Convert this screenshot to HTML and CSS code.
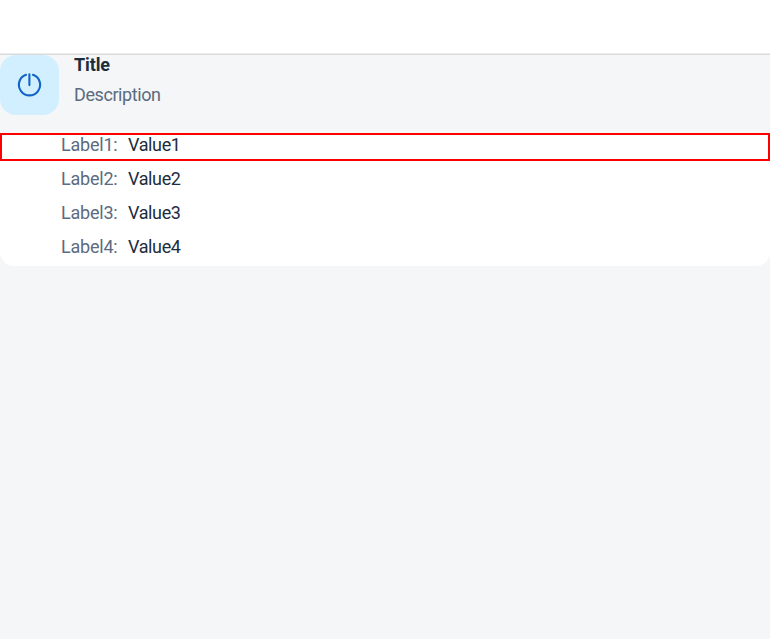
FILE: index.html
```html
<!DOCTYPE html>
<html lang="en">
<head>
<meta charset="utf-8">
<title>Details</title>
<link rel="stylesheet" href="styles.css">
</head>
<body>
<header class="shell"></header>
<main>
  <section class="heading">
    <div class="avatar">
      <svg width="25" height="24" viewBox="0 0 25 24" fill="none" stroke="#1263c6" stroke-width="2.1" stroke-linecap="round"><path d="M12.4 1.3v10.8M9 1.8a10.6 10.6 0 1 0 7 0"/></svg>
    </div>
    <div class="headline">
      <h1>Title</h1>
      <p>Description</p>
    </div>
  </section>
  <div class="list-top"></div>
  <section class="list">
    <div class="row selected"><span class="label">Label1:</span><span class="value">Value1</span></div>
    <div class="row"><span class="label">Label2:</span><span class="value">Value2</span></div>
    <div class="row"><span class="label">Label3:</span><span class="value">Value3</span></div>
    <div class="row"><span class="label">Label4:</span><span class="value">Value4</span></div>
  </section>
</main>
</body>
</html>
```
FILE: styles.css
```css
* { box-sizing: border-box; }
body { margin: 0; height: 639px; overflow: hidden; background: #f5f6f7; color: #1d2d3e; font: 18px/24px Roboto, "Liberation Sans", sans-serif; }
.shell { height: 53px; background: #fff; box-shadow: 0 1px 0 #ececec, 0 2px 0 #d9dada; }
.heading { display: flex; height: 77px; padding-top: 2px; }
.avatar { display: flex; align-items: center; justify-content: center; width: 59px; height: 60px; border-radius: 16px; background: #d1efff; }
.headline { margin-left: 15px; }
h1, p { margin: 0; font-size: 18px; line-height: 20px; }
h1 { font-weight: 700; letter-spacing: -0.1px; }
p { margin-top: 10px; color: #5b6b80; letter-spacing: -0.42px; }
.list-top { height: 3px; margin: 0 6px; background: #f7f8f9; }
.list { height: 133px; background: #fff; border-radius: 0 0 14px 14px; }
.row { display: flex; height: 28px; margin-bottom: 6px; border: 2px solid transparent; line-height: 20px; }
.selected { border-color: #ff0000; }
.label { width: 67px; margin-left: 59px; color: #5b6b80; letter-spacing: -0.22px; }
.value { letter-spacing: -0.38px; }
```
